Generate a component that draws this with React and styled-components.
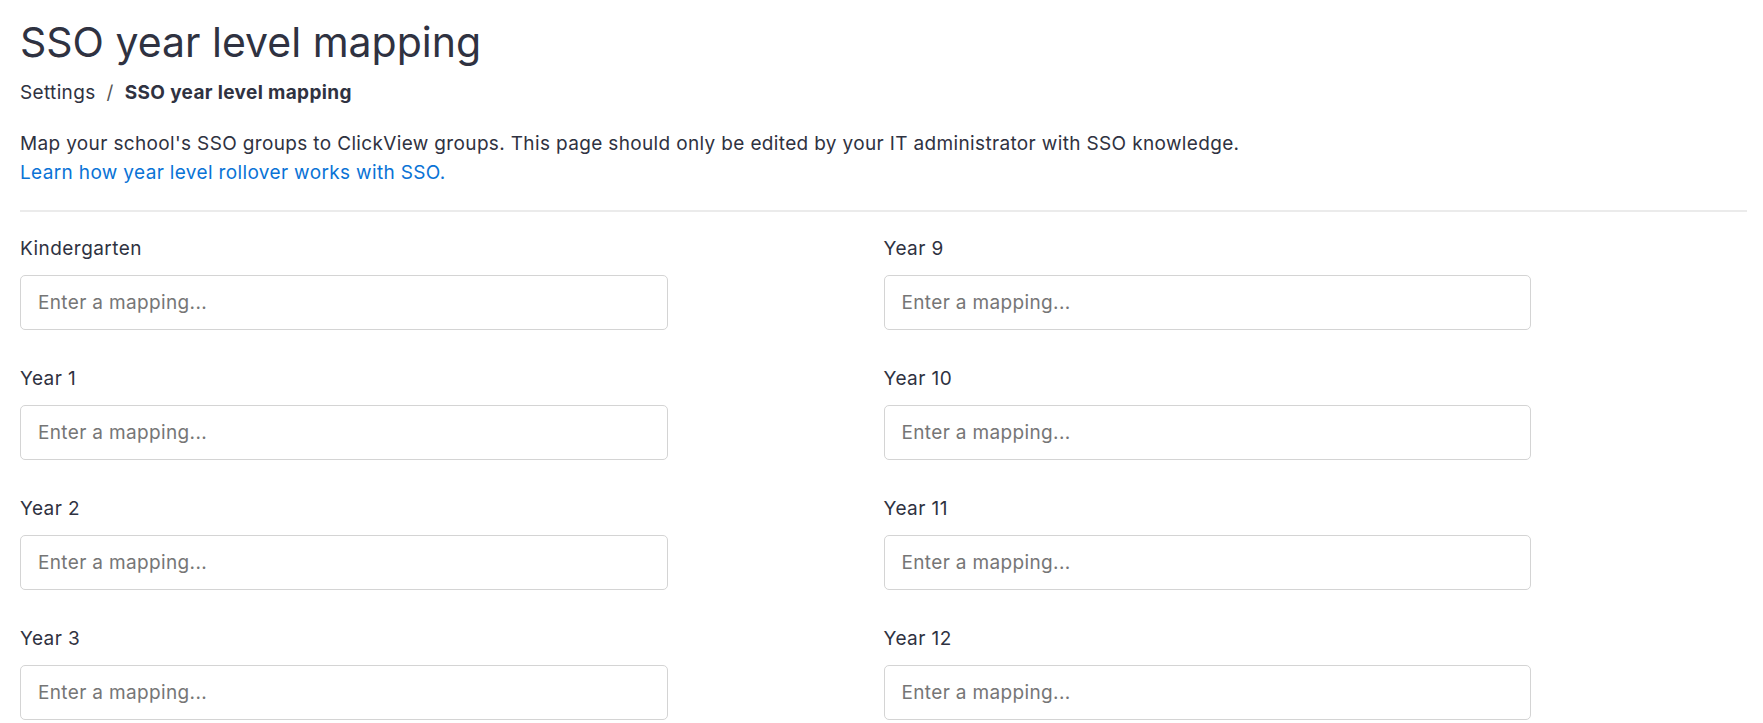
import React from 'react';
import styled, { createGlobalStyle } from "styled-components";

const GlobalStyle = createGlobalStyle`
  html, body {
    margin: 0;
    padding: 0;
    background: #ffffff;
  }
  body {
    font-family: Inter, "Noto Sans", sans-serif;
    color: #2f3241;
    letter-spacing: 0.35px;
  }
  * {
    box-sizing: border-box;
  }
`;

const Page = styled.div`
  padding: 18px 16px 0 20px;
`;

const Title = styled.h1`
  margin: 0;
  font-size: 41px;
  line-height: 48px;
  font-weight: 400;
  letter-spacing: 0;
  color: #2f3241;
`;

const Breadcrumb = styled.nav`
  display: flex;
  align-items: center;
  margin-top: 13px;
  font-size: 19px;
  line-height: 27px;

  span.sep {
    margin: 0 11px;
    color: #555;
  }

  strong {
    font-weight: 700;
  }
`;

const Description = styled.p`
  margin: 23px 0 0 0;
  font-size: 19px;
  line-height: 29px;
  padding-bottom: 23px;
  border-bottom: 2px solid #ebebeb;

  a {
    color: #0a73d6;
    text-decoration: none;
  }
`;

const Grid = styled.div`
  display: grid;
  grid-template-columns: 1fr 1fr;
  grid-auto-flow: column;
  grid-template-rows: repeat(4, auto);
  padding-top: 23px;
`;

const Field = styled.div`
  display: flex;
  flex-direction: column;
  margin-bottom: 35px;
`;

const Label = styled.label`
  font-size: 19px;
  line-height: 27px;
  letter-spacing: 0.45px;
  color: #2f3241;
  margin-bottom: 13px;
`;

const Input = styled.input`
  width: 75%;
  height: 55px;
  padding: 0 17px;
  border: 1px solid #d4d4d4;
  border-radius: 5px;
  font-family: Inter, "Noto Sans", sans-serif;
  font-size: 19px;
  letter-spacing: 0.35px;
  color: #2f3241;
  background: #fff;
  outline: none;

  &::placeholder {
    color: #767676;
  }
`;

const levels = [
  "Kindergarten", "Year 1", "Year 2", "Year 3",
  "Year 9", "Year 10", "Year 11", "Year 12",
];

const App = () => {
  return (
    <Page>
      <GlobalStyle />
      <Title>SSO year level mapping</Title>
      <Breadcrumb>
        <span>Settings</span>
        <span className="sep">/</span>
        <strong>SSO year level mapping</strong>
      </Breadcrumb>
      <Description>
        Map your school's SSO groups to ClickView groups. This page should only be edited by your IT administrator with SSO knowledge.
        <br />
        <a href="#">Learn how year level rollover works with SSO.</a>
      </Description>
      <Grid>
        {levels.map((level) => (
          <Field key={level}>
            <Label>{level}</Label>
            <Input placeholder="Enter a mapping..." />
          </Field>
        ))}
      </Grid>
    </Page>
  );
};

export default App;
